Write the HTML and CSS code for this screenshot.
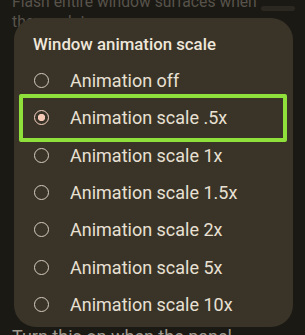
FILE: index.html
```html
<!DOCTYPE html>
<html lang="en">
<head>
  <meta charset="UTF-8" />
  <meta name="viewport" content="width=device-width, initial-scale=1.0" />
  <title>Window animation scale</title>
  <link rel="stylesheet" href="styles.css">
</head>
<body>

  <div class="screen">
    <div class="settings">
      <div class="setting-row">
        <div class="summary">Flash entire window surfaces when<br>they update</div>
        <div class="toggle"></div>
      </div>
      <div class="spacer"></div>
      <div class="setting-title">Turn this on when the panel</div>
    </div>

    <div class="dialog">
      <div class="dialog-title">Window animation scale</div>
      <ul class="options">
        <li><span class="radio"></span>Animation off</li>
        <li><span class="radio checked"></span>Animation scale .5x</li>
        <li><span class="radio"></span>Animation scale 1x</li>
        <li><span class="radio"></span>Animation scale 1.5x</li>
        <li><span class="radio"></span>Animation scale 2x</li>
        <li><span class="radio"></span>Animation scale 5x</li>
        <li><span class="radio"></span>Animation scale 10x</li>
      </ul>
      <div class="highlight"></div>
    </div>
  </div>

</body>
</html>
```

FILE: styles.css
```css
* {
  box-sizing: border-box;
  margin: 0;
  padding: 0;
}
body {
  font-family: Roboto, "Noto Sans", sans-serif;
  background-color: #1b1914;
  color: #e9e1d5;
  width: 305px;
  height: 335px;
  overflow: hidden;
}
.screen {
  position: relative;
  display: flow-root;
  width: 305px;
  height: 335px;
  overflow: hidden;
}
.settings {
  padding-left: 12px;
  margin-top: -8px;
}
.setting-row {
  display: flex;
  justify-content: space-between;
}
.summary {
  font-size: 15.7px;
  line-height: 20px;
  color: #57534b;
  white-space: nowrap;
}
.setting-title {
  font-size: 18px;
  line-height: 21px;
  color: #9e998f;
  white-space: nowrap;
}
.toggle {
  width: 34px;
  height: 5px;
  margin: 14px 10px 0 0;
  border-radius: 3px;
  background-color: #2b2821;
}
.spacer {
  height: 294px;
}
.dialog {
  position: absolute;
  left: 14px;
  top: 18px;
  width: 279px;
  height: 309px;
  padding-top: 16px;
  border-radius: 22px;
  background-color: #3a3428;
}
.dialog-title {
  padding-left: 19px;
  font-size: 16.8px;
  line-height: 20px;
  font-weight: 500;
  color: #efe7da;
}
.options {
  list-style-type: none;
  margin-top: 8px;
}
.options li {
  display: flex;
  align-items: center;
  height: 37.3px;
  padding-left: 20px;
  font-size: 18px;
  color: #e8e0d3;
}
.radio {
  width: 15px;
  height: 15px;
  margin-right: 21px;
  border: 1.8px solid #d6cdbf;
  border-radius: 50%;
  flex-shrink: 0;
}
.radio.checked {
  border-color: #f7d3c4;
  background: radial-gradient(circle, #f6c9b7 0 3.4px, transparent 3.9px);
}
.highlight {
  position: absolute;
  left: 5px;
  top: 76px;
  width: 268px;
  height: 48px;
  border: 4.5px solid #8fe03a;
  border-radius: 2px;
}
```
